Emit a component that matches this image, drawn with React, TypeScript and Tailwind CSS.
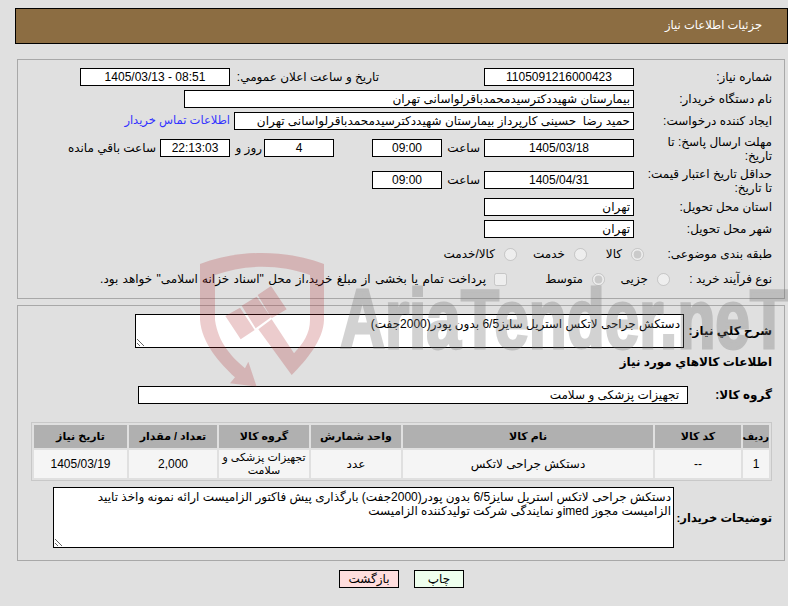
import React from 'react';

const fieldClass = 'h-[18px] border border-black bg-white px-[3px] text-[12px] text-black outline-none';

const Field = ({ value, width, center, ltr, className }: { value: string; width: string; center?: boolean; ltr?: boolean; className?: string }) => (
  <input
    readOnly
    value={value}
    dir={ltr ? 'ltr' : undefined}
    className={`${fieldClass} ${width} ${center ? 'text-center' : 'text-right'} ${className || ''}`}
  />
);

const Label = ({ children, width, bold }: { children: React.ReactNode; width: string; bold?: boolean }) => (
  <div className={`${width} shrink-0 leading-[14px] ${bold ? 'font-bold whitespace-nowrap' : ''}`}>{children}</div>
);

const Radio = ({ label, checked, width }: { label: string; checked?: boolean; width: string }) => (
  <label className={`flex items-center gap-[9px] ${width}`}>
    <input type="radio" disabled defaultChecked={checked} className="w-[13px] h-[13px] shrink-0" />
    <span>{label}</span>
  </label>
);

const headers = [
  { title: 'ردیف', className: 'w-[26px] text-[10px]' },
  { title: 'کد کالا', className: 'w-[86px]' },
  { title: 'نام کالا', className: 'w-[250px]' },
  { title: 'واحد شمارش', className: 'w-[90px]' },
  { title: 'گروه کالا', className: 'w-[90px]' },
  { title: 'تعداد / مقدار', className: 'w-[88px]' },
  { title: 'تاریخ نیاز', className: 'w-[93px]' },
];

const row = [
  { text: '1', className: 'text-[12px]' },
  { text: '--', className: 'text-[12px]' },
  { text: 'دستکش جراحی لاتکس', className: 'text-[12px]' },
  { text: 'عدد', className: 'text-[12px]' },
  { text: 'تجهیزات پزشکی و\nسلامت', className: 'text-[11px]' },
  { text: '2,000', className: 'text-[12px]' },
  { text: '1405/03/19', className: 'text-[12px]' },
];

const Watermark = () => (
  <div className="absolute inset-0 pointer-events-none overflow-hidden">
    <svg className="absolute left-[190px] top-[240px] w-[150px] h-[170px]" viewBox="0 0 450 510">
      <path
        fill="rgba(172,35,40,0.23)"
        d="M30,72 C140,28 290,28 402,72 L402,240 C400,300 350,360 305,405 L205,268 L245,238 L312,340 C340,310 360,280 360,240 L360,105 C270,72 165,72 75,105 L75,240 C85,310 125,350 165,385 L175,365 L200,440 L120,430 L135,412 C90,370 35,310 30,240 Z M106,228 L150,203 L194,270 L152,298 Z M155,197 L200,170 L243,232 L197,265 Z M203,165 L243,138 L290,208 L245,235 Z"
      />
    </svg>
    <span className="absolute left-[340px] top-[277px] origin-left scale-x-[0.74] opacity-30 font-['Liberation_Sans',sans-serif] text-[84px] leading-none font-bold text-[#6e6e6e] [-webkit-text-stroke:3px_#6e6e6e] whitespace-nowrap" dir="ltr">
      AriaTender.neT
    </span>
  </div>
);

export default function App() {
  return (
    <div dir="rtl" className="relative w-[788px] h-[606px] overflow-hidden bg-[#e0e0e0] text-[12px] text-black font-['Liberation_Sans','DejaVu_Sans',sans-serif]">
      <div className="pt-2 pl-[15px]">
        <div className="h-9 border border-black bg-[#8c6d42] text-white flex items-center pr-[25px] text-[11.5px]">
          جزئیات اطلاعات نیاز
        </div>

        <div className="mt-[15px] ml-[2px] mr-[3px] h-[240px] border border-[#a8a8a8] pt-2 pr-3 flex flex-col gap-1">
          <div className="flex items-center h-[18px]">
            <Label width="w-[138px]">شماره نیاز:</Label>
            <Field value="1105091216000423" width="w-[150px]" center />
            <div className="mr-[105px] w-[149px] shrink-0">تاریخ و ساعت اعلان عمومي:</div>
            <Field value="1405/03/13 - 08:51" width="w-[150px]" center ltr />
          </div>
          <div className="flex items-center h-[18px]">
            <Label width="w-[138px]">نام دستگاه خریدار:</Label>
            <Field value="بیمارستان شهیددکترسیدمحمدباقرلواسانی تهران" width="w-[450px]" />
          </div>
          <div className="flex items-center h-[18px]">
            <Label width="w-[138px]">ایجاد کننده درخواست:</Label>
            <Field value="حمید رضا  حسینی کارپرداز بیمارستان شهیددکترسیدمحمدباقرلواسانی تهران" width="w-[400px]" />
            <a className="mr-1 text-[#3333ff] text-[11.5px]">اطلاعات تماس خریدار</a>
          </div>
          <div className="flex items-center h-[28px]">
            <Label width="w-[138px]"><div className="pt-[2px]">مهلت ارسال پاسخ: تا<br />تاریخ:</div></Label>
            <Field value="1405/03/18" width="w-[150px]" center />
            <div className="mr-1 w-[38px] shrink-0">ساعت</div>
            <Field value="09:00" width="w-[70px]" center />
            <Field value="4" width="w-[70px]" center className="mr-[38px]" />
            <div className="mr-[2px] w-[32px] shrink-0">روز و</div>
            <Field value="22:13:03" width="w-[70px]" center className="bg-[#ffffee]" />
            <div className="mr-1">ساعت باقي مانده</div>
          </div>
          <div className="flex items-center h-[28px]">
            <Label width="w-[138px]"><div className="pt-[2px]">حداقل تاریخ اعتبار قیمت:<br />تا تاریخ:</div></Label>
            <Field value="1405/04/31" width="w-[150px]" center />
            <div className="mr-1 w-[38px] shrink-0">ساعت</div>
            <Field value="09:00" width="w-[70px]" center />
          </div>
          <div className="flex items-center h-[18px]">
            <Label width="w-[138px]">استان محل تحویل:</Label>
            <Field value="تهران" width="w-[150px]" />
          </div>
          <div className="flex items-center h-[18px]">
            <Label width="w-[138px]">شهر محل تحویل:</Label>
            <Field value="تهران" width="w-[150px]" />
          </div>
          <div className="flex items-center h-[24px]">
            <Label width="w-[128px]">طبقه بندی موضوعی:</Label>
            <Radio label="کالا" checked width="w-[57px]" />
            <Radio label="خدمت" width="w-[70px]" />
            <Radio label="کالا/خدمت" width="w-[80px]" />
          </div>
          <div className="flex items-center h-[18px]">
            <Label width="w-[102px]">نوع فرآیند خرید :</Label>
            <Radio label="جزیی" width="w-[65px]" />
            <Radio label="متوسط" checked width="w-[98px]" />
            <label className="flex items-center gap-2">
              <input type="checkbox" disabled className="w-[13px] h-[13px] shrink-0" />
              <span className="[word-spacing:1px]">پرداخت تمام یا بخشی از مبلغ خرید،از محل "اسناد خزانه اسلامی" خواهد بود.</span>
            </label>
          </div>
        </div>

        <div className="mt-[6px] ml-[2px] mr-[3px] h-[256px] border border-[#a8a8a8] pt-2 pr-3">
          <div className="flex items-center">
            <Label width="w-[88px]" bold>شرح کلي نیاز:</Label>
            <textarea
              readOnly
              value="دستکش جراحی لاتکس استریل سایز6/5 بدون پودر(2000جفت)"
              className="w-[549px] h-[34px] border border-black bg-white px-[3px] py-[2px] text-[12px] leading-[14px] outline-none block"
            />
          </div>
          <div className="mt-[6px] h-4 leading-4 font-bold">اطلاعات کالاهاي مورد نیاز</div>
          <div className="mt-4 flex items-center">
            <Label width="w-[84px]" bold>گروه کالا:</Label>
            <Field value="تجهیزات پزشکی و سلامت" width="w-[550px]" className="pr-2" />
          </div>
          <table className="mt-[18px] w-[741px] table-fixed border border-[#c8c8c8] border-separate border-spacing-[2px] text-[11px]">
            <thead>
              <tr>
                {headers.map((h) => (
                  <th key={h.title} className={`${h.className} h-[23px] bg-[#b0b0b0] p-0 font-bold text-center`}>{h.title}</th>
                ))}
              </tr>
            </thead>
            <tbody>
              <tr>
                {row.map((cell, i) => (
                  <td key={i} className={`${cell.className} h-7 bg-[#f5f5f5] p-0 text-center leading-[13px] whitespace-pre overflow-hidden`}>{cell.text}</td>
                ))}
              </tr>
            </tbody>
          </table>
          <div className="mt-[6px] flex items-center">
            <Label width="w-[98px]" bold><span className="text-[11.5px]">توضیحات خریدار:</span></Label>
            <textarea
              readOnly
              value="دستکش جراحی لاتکس استریل سایز6/5 بدون پودر(2000جفت) بارگذاری پیش فاکتور الزامیست ارائه نمونه واخذ تایید الزامیست مجوز imedو نمایندگی شرکت تولیدکننده الزامیست"
              className="w-[621px] h-[61px] border border-black bg-white px-[2px] py-[2px] text-[12px] leading-[14px] outline-none block"
            />
          </div>
        </div>

        <div className="mt-[9px] flex justify-center gap-[15px]">
          <button className="w-[50px] h-[18px] border border-black bg-[#eeffee] text-[12px] leading-none">چاپ</button>
          <button className="w-[60px] h-[18px] border border-black bg-[#ffdddd] text-[12px] leading-none">بازگشت</button>
        </div>
      </div>
      <Watermark />
    </div>
  );
}
